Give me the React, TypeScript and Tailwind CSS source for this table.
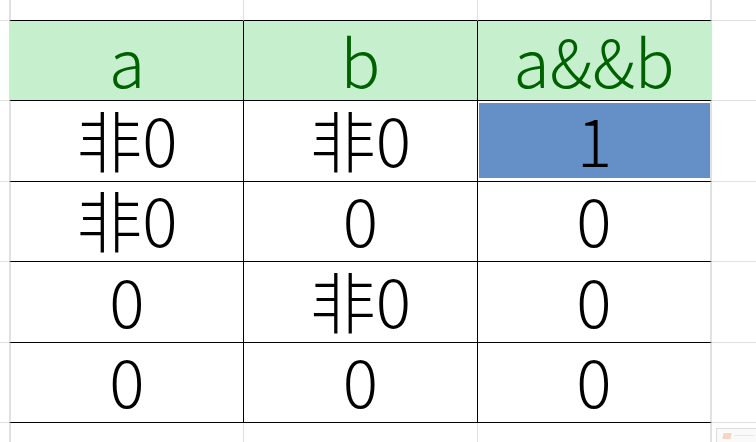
import React from "react";

const font = { fontFamily: '"Noto Sans CJK SC", "Noto Sans", sans-serif' };

function Head({ children, pos }: { children: React.ReactNode; pos: "first" | "mid" | "last" }) {
  const side =
    pos === "first"
      ? "border-l-2 border-l-[#c6efce] border-r border-r-black"
      : pos === "last"
      ? "border-r-2 border-r-[#c6efce]"
      : "border-r border-r-black";
  return (
    <div
      className={
        "flex items-end justify-center bg-[#c6efce] text-[#006100] text-[66px] font-light leading-none pb-[8px] border-b border-b-black " +
        side
      }
    >
      {children}
    </div>
  );
}

function Cell({ children, pos }: { children: React.ReactNode; pos: "first" | "mid" | "last" }) {
  const side =
    pos === "first"
      ? "border-l-2 border-l-[#e1e1e1] border-r border-r-black"
      : pos === "last"
      ? "border-r-2 border-r-[#e1e1e1]"
      : "border-r border-r-black";
  return (
    <div
      className={
        "flex items-end justify-center bg-white text-black text-[66px] font-light leading-none pb-[10px] border-b border-b-black " +
        side
      }
    >
      {children}
    </div>
  );
}

function Gap() {
  return <div className="bg-white border-b border-b-[#e1e1e1]" />;
}

export default function App() {
  const rows: [string, string, string][] = [
    ["非0", "非0", "1"],
    ["非0", "0", "0"],
    ["0", "非0", "0"],
    ["0", "0", "0"],
  ];
  return (
    <div className="relative w-[756px] h-[442px] bg-white overflow-hidden" style={font}>
      <div className="grid w-full h-full grid-cols-[9px_235px_234px_234px_1fr] grid-rows-[21px_80px_81px_80px_81px_80px_1fr]">
        {/* top spacer row */}
        <Gap />
        <div className="border-b border-b-black border-l-2 border-l-[#e1e1e1] border-r border-r-[#e1e1e1]" />
        <div className="border-b border-b-black border-r border-r-[#e1e1e1]" />
        <div className="border-b border-b-black border-r-2 border-r-[#e1e1e1]" />
        <Gap />

        {/* header */}
        <Gap />
        <Head pos="first">a</Head>
        <Head pos="mid">b</Head>
        <Head pos="last">a&amp;&amp;b</Head>
        <Gap />

        {rows.map((r, i) => (
          <React.Fragment key={i}>
            <Gap />
            <Cell pos="first">{r[0]}</Cell>
            <Cell pos="mid">{r[1]}</Cell>
            {i === 0 ? (
              <div className="flex bg-white border-b border-b-black border-r-2 border-r-[#e1e1e1] pl-[1px] pt-[2px] pb-[3px]">
                <div className="flex-1 flex items-end justify-center bg-[#6590c7] text-black text-[66px] font-light leading-none pb-[7px]">
                  {r[2]}
                </div>
              </div>
            ) : (
              <Cell pos="last">{r[2]}</Cell>
            )}
            <Gap />
          </React.Fragment>
        ))}

        {/* bottom row */}
        <div />
        <div className="border-l-2 border-l-[#e1e1e1] border-r border-r-[#e1e1e1]" />
        <div className="border-r border-r-[#e1e1e1]" />
        <div className="border-r-2 border-r-[#e1e1e1]" />
        <div />
      </div>

      {/* paste options tag */}
      <div className="absolute left-[716px] top-[428px] w-[50px] h-[30px] border border-[#dcdcdc] bg-[#fafafa] flex items-start pl-[6px] pt-[4px] gap-[3px]">
        <div className="w-[8px] h-[6px] bg-[#f6d5c4] -skew-x-12" />
        <div className="w-[20px] h-[1px] mt-[2px] bg-[#e6e6e6]" />
      </div>
    </div>
  );
}
